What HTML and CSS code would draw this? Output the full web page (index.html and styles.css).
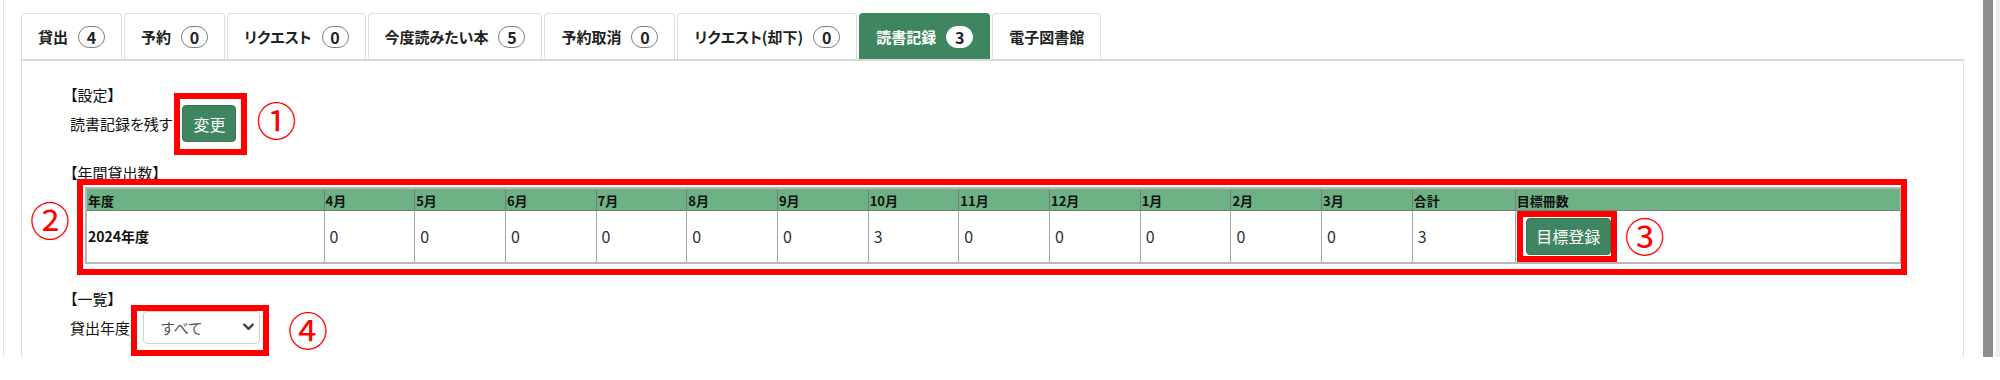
FILE: index.html
```html
<!DOCTYPE html>
<html lang="ja">
<head>
<meta charset="utf-8">
<title>読書記録</title>
<link rel="stylesheet" href="styles.css">
</head>
<body>
<div class="page">
  <div class="main">
    <div class="tabs">
      <div class="tab"><span>貸出</span><span class="badge">4</span></div>
      <div class="tab"><span>予約</span><span class="badge">0</span></div>
      <div class="tab"><span>リクエスト</span><span class="badge">0</span></div>
      <div class="tab"><span>今度読みたい本</span><span class="badge">5</span></div>
      <div class="tab"><span>予約取消</span><span class="badge">0</span></div>
      <div class="tab"><span>リクエスト(却下)</span><span class="badge">0</span></div>
      <div class="tab active"><span>読書記録</span><span class="badge">3</span></div>
      <div class="tab"><span>電子図書館</span></div>
    </div>
    <div class="panel">
      <div class="h">【設定】</div>
      <div class="row setting">
        <span class="label">読書記録を残す</span>
        <span class="anno"><span class="btn">変更</span><span class="redbox rb1"></span></span>
        <span class="num n1">①</span>
      </div>
      <div class="h h2">【年間貸出数】</div>
      <div class="table-wrap">
        <table class="stats">
          <colgroup>
            <col class="c-year">
            <col class="c-m"><col class="c-m"><col class="c-m"><col class="c-m"><col class="c-m"><col class="c-m">
            <col class="c-m"><col class="c-m"><col class="c-m"><col class="c-m"><col class="c-m"><col class="c-m">
            <col class="c-sum">
            <col class="c-goal">
          </colgroup>
          <thead>
            <tr>
              <th>年度</th><th>4月</th><th>5月</th><th>6月</th><th>7月</th><th>8月</th><th>9月</th>
              <th>10月</th><th>11月</th><th>12月</th><th>1月</th><th>2月</th><th>3月</th><th>合計</th><th>目標冊数</th>
            </tr>
          </thead>
          <tbody>
            <tr>
              <td class="year">2024年度</td>
              <td>0</td><td>0</td><td>0</td><td>0</td><td>0</td><td>0</td>
              <td>3</td><td>0</td><td>0</td><td>0</td><td>0</td><td>0</td>
              <td>3</td>
              <td class="goal">
                <div class="goal-row">
                  <span class="anno"><span class="btn btn-goal">目標登録</span><span class="redbox rb3"></span></span>
                  <span class="num n3">③</span>
                </div>
              </td>
            </tr>
          </tbody>
        </table>
        <span class="redbox rb2"></span>
        <span class="num n2">②</span>
      </div>
      <div class="h h3">【一覧】</div>
      <div class="row filter">
        <span class="label">貸出年度</span>
        <span class="anno anno-select">
          <span class="select"><span>すべて</span>
            <svg class="chev" width="11" height="8" viewBox="0 0 11 8"><path d="M1.3 1.6 L5.5 5.8 L9.7 1.6" fill="none" stroke="#444" stroke-width="2.4" stroke-linecap="round" stroke-linejoin="round"/></svg>
          </span>
          <span class="redbox rb4"></span>
        </span>
        <span class="num n4">④</span>
      </div>
    </div>
  </div>
  <div class="scrollbar"></div>
  <div class="gap"></div>
  <div class="edge"></div>
</div>
</body>
</html>
```

FILE: styles.css
```css
* { box-sizing: border-box; }

body {
  margin: 0;
  background: #fff;
  color: #111;
  font-family: "Noto Sans CJK JP", "Noto Sans", sans-serif;
  font-feature-settings: "palt";
}

.page {
  display: flex;
  height: 357px;
  overflow: hidden;
  background: #fff;
}

.main {
  width: 1980px;
  margin-left: 3px;
  border-left: 1px solid #e4e4e4;
  padding: 13px 19px 0 17px;
}

.scrollbar { width: 10px; background: #8e8e8e; }
.gap { width: 3px; }
.edge { width: 4px; background: #eeeeee; }

/* tabs */
.tabs {
  display: flex;
  gap: 2px;
  height: 46px;
}

.tab {
  display: flex;
  align-items: center;
  gap: 10px;
  padding: 0 16px;
  border: 1px solid #dedede;
  border-bottom: 0;
  border-radius: 4px 4px 0 0;
  background: #fff;
  color: #222;
  font-size: 15px;
  font-weight: 700;
  white-space: nowrap;
}

.tab.active {
  background: #3f8660;
  border-color: #3f8660;
  color: #fff;
}

.badge {
  display: flex;
  align-items: center;
  justify-content: center;
  min-width: 27px;
  height: 22px;
  border: 1px solid #808080;
  border-radius: 11px;
  background: #fff;
  color: #222;
  font-size: 16px;
  font-weight: 700;
}

.tab.active .badge { border-color: #fff; }

/* panel */
.panel {
  height: 420px;
  border: 1px solid #dedede;
  border-top: 2px solid #d8d8d8;
  padding: 24px 0 0 48px;
}

.h {
  height: 20px;
  font-size: 15px;
  line-height: 20px;
  color: #111;
}

.row {
  display: flex;
  align-items: center;
}

.label {
  font-size: 15px;
  color: #111;
}

.setting { height: 37px; gap: 10px; }

.anno { position: relative; display: inline-flex; }

.btn {
  display: inline-flex;
  align-items: center;
  justify-content: center;
  height: 37px;
  width: 54px;
  border: 1px solid #367553;
  border-radius: 4px;
  background: #3f8660;
  color: #fff;
  font-size: 16px;
}

.btn-goal { width: 85px; }

.redbox {
  position: absolute;
  border: 6px solid #ff0000;
  pointer-events: none;
}

.rb1 { left: -8px; top: -12px; width: 73px; height: 62px; }
.rb2 { left: -8px; top: -8px; width: 1830px; height: 96px; }
.rb3 { left: -9px; top: -7px; width: 100px; height: 51px; }
.rb4 { left: -12px; top: -6px; width: 138px; height: 51px; }

.num {
  color: #ff0000;
  font-family: "Noto Sans CJK JP", sans-serif;
  font-size: 40px;
  line-height: 40px;
  font-weight: 400;
}

.n1 { margin-left: 10px; margin-top: -9px; }

.h2 { margin-top: 21px; }

.table-wrap {
  position: relative;
  width: 1816px;
  margin: 4px 0 0 15px;
}

.n2 { position: absolute; left: -55px; top: 12px; }

.n3 { margin-top: -2px; }

.stats {
  width: 1816px;
  table-layout: fixed;
  border-collapse: collapse;
  border: 2px solid #b8b8b8;
}

.c-year { width: 238px; }
.c-m { width: 90.7px; }
.c-sum { width: 103px; }
.c-goal { width: 386px; }

.stats th {
  height: 22px;
  padding: 2px 1px 0;
  background: #6cb285;
  border: 1px solid #7c7c7c;
  color: #111;
  font-size: 13px;
  font-weight: 700;
  text-align: left;
  white-space: nowrap;
}

.stats td {
  height: 52px;
  padding: 0 5px;
  border: 1px solid #a6a6a6;
  color: #333;
  font-size: 16px;
  vertical-align: middle;
}

.stats td.year {
  padding-left: 1px;
  font-size: 14px;
  font-weight: 700;
  color: #111;
}

.stats td.goal { padding: 0 10px; }

.goal-row {
  display: flex;
  align-items: center;
  gap: 14px;
}

.h3 { margin-top: 25px; }

.filter { margin-top: 2px; height: 33px; gap: 13px; }

.select {
  display: flex;
  align-items: center;
  justify-content: space-between;
  width: 117px;
  height: 33px;
  padding: 0 5px 0 17px;
  border: 1px solid #cfcfcf;
  border-radius: 4px;
  background: #fff;
  color: #555;
  font-size: 15px;
}

.n4 { margin-left: 15px; margin-top: 4px; }
```
